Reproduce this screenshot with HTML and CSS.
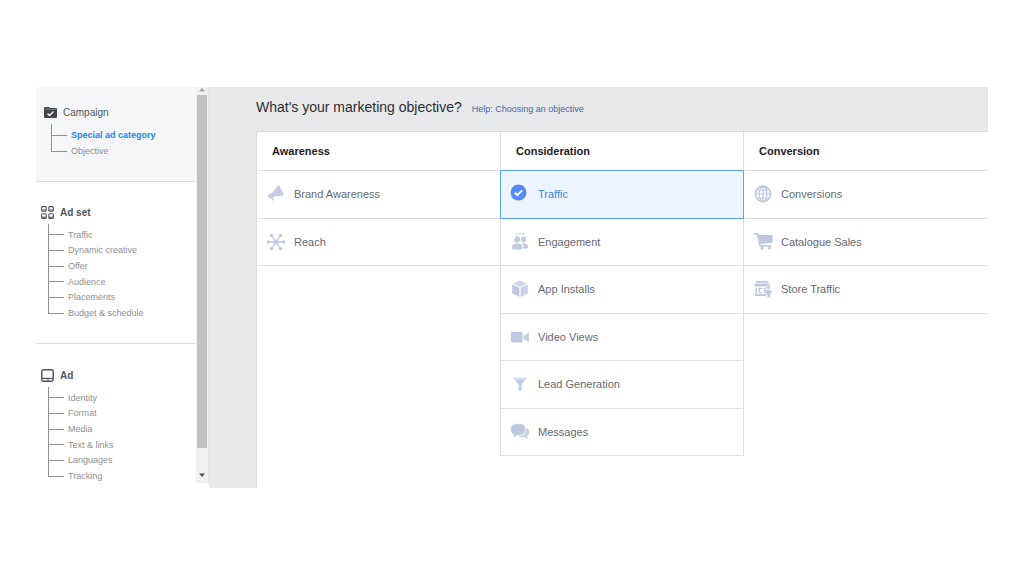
FILE: index.html
```html
<!DOCTYPE html>
<html lang="en">
<head>
<meta charset="utf-8">
<meta name="viewport" content="width=device-width, initial-scale=1">
<title>Campaign objective</title>
<link rel="stylesheet" href="styles.css">
</head>
<body>
<div class="app">
  <nav class="sidebar" aria-label="Campaign steps">
    <div class="steps">
      <section class="step step-current">
        <h2 class="step-title">
          <svg class="step-icon" viewBox="0 0 13 13" aria-hidden="true"><path fill="#3f4650" d="M1 1h4l1 1h6q1 0 1 1v8q0 1-1 1H1q-1 0-1-1V2q0-1 1-1z"/><path fill="none" stroke="#8d949e" stroke-width=".7" d="M1 3.300h11"/><path fill="none" stroke="#fff" stroke-width="1.4" d="M3.5 7.5l2 2 4-4"/></svg>
          Campaign</h2>
        <ul class="tree">
          <li><a class="current" href="#special">Special ad category</a></li>
          <li><a href="#objective">Objective</a></li>
        </ul>
      </section>
      <section class="step">
        <h2 class="step-title strong">
          <svg class="step-icon" viewBox="0 0 13 13" aria-hidden="true"><g fill="#fff" stroke="#4b5260" stroke-width="1.1"><rect x=".6" y=".6" width="4.6" height="4.6" rx="1"/><rect x="7.8" y=".6" width="4.6" height="4.6" rx="1"/><rect x=".6" y="7.8" width="4.6" height="4.6" rx="1"/><rect x="7.8" y="7.8" width="4.6" height="4.6" rx="1"/></g><path stroke="#4b5260" d="M1 4h4M8 4h4M1 11.2h4M8 11.2h4"/></svg>
          Ad set</h2>
        <ul class="tree">
          <li><a href="#traffic">Traffic</a></li>
          <li><a href="#dynamic">Dynamic creative</a></li>
          <li><a href="#offer">Offer</a></li>
          <li><a href="#audience">Audience</a></li>
          <li><a href="#placements">Placements</a></li>
          <li><a href="#budget">Budget &amp; schedule</a></li>
        </ul>
      </section>
      <section class="step step-last">
        <h2 class="step-title strong">
          <svg class="step-icon" viewBox="0 0 13 13" aria-hidden="true"><rect x=".8" y=".8" width="11.4" height="11.4" rx="1.6" fill="#fff" stroke="#4b5260" stroke-width="1.4"/><path stroke="#4b5260" stroke-width="1.2" d="M1 9.4h11"/><path stroke="#4b5260" d="M6 11h2"/></svg>
          Ad</h2>
        <ul class="tree">
          <li><a href="#identity">Identity</a></li>
          <li><a href="#format">Format</a></li>
          <li><a href="#media">Media</a></li>
          <li><a href="#text">Text &amp; links</a></li>
          <li><a href="#languages">Languages</a></li>
          <li><a href="#tracking">Tracking</a></li>
        </ul>
      </section>
    </div>
    <div class="scrollbar" aria-hidden="true">
      <svg class="arrow" viewBox="0 0 12 8"><path fill="#a3a3a3" d="M3 4.500h6L6 1z"/></svg>
      <div class="track"><div class="thumb"></div></div>
      <svg class="arrow arrow-down" viewBox="0 0 12 16"><path fill="#505050" d="M3 6.5h6L6 10z"/></svg>
    </div>
  </nav>

  <main class="main">
    <header class="heading">
      <h1>What's your marketing objective?</h1>
      <a href="#help">Help: Choosing an objective</a>
    </header>
    <div class="panel">
      <section class="column">
        <h2>Awareness</h2>
        <ul class="options">
          <li><button type="button"><svg class="icon" viewBox="0 0 20 20" aria-hidden="true"><path fill="#c3cce1" d="M12.2 1.6q1-.4 1.5.6l4 8.2q.3 1-.8 1.1L9 12.4l-2 .8.9 2.2q.3.8-.5 1.1-.8.3-1.2-.5l-1-2.2q-2 .7-2.8.2-1.4-2.3.4-3.6l4-2.1z"/></svg>Brand Awareness</button></li>
          <li><button type="button"><svg class="icon" viewBox="0 0 20 20" aria-hidden="true"><path stroke="#bccae4" stroke-width="1.3" d="M2 10h16M5.5 3.5l9 13M14.5 3.5l-9 13"/><g fill="#bccae4"><circle cx="10" cy="10" r="2.4"/><circle cx="2.2" cy="10" r="1.7"/><circle cx="17.8" cy="10" r="1.7"/><circle cx="5.5" cy="3.5" r="1.7"/><circle cx="14.5" cy="3.5" r="1.7"/><circle cx="5.5" cy="16.5" r="1.7"/><circle cx="14.5" cy="16.5" r="1.7"/></g></svg>Reach</button></li>
        </ul>
      </section>
      <section class="column">
        <h2>Consideration</h2>
        <ul class="options">
          <li class="selected"><button type="button" aria-pressed="true"><svg class="icon" viewBox="0 0 20 20" aria-hidden="true"><circle cx="8.500" cy="8.500" r="8" fill="#558af6"/><path fill="none" stroke="#fff" stroke-width="2" d="M4.700 8.7l2.6 2.5 4.8-4.8"/></svg>Traffic</button></li>
          <li><button type="button"><svg class="icon" viewBox="0 0 20 20" aria-hidden="true"><g fill="#c3cce1"><circle cx="6.6" cy="1.9" r=".9"/><circle cx="9.8" cy="1.9" r=".9"/><circle cx="13" cy="1.9" r=".9"/><ellipse cx="7.2" cy="7.4" rx="2.8" ry="3.1"/><ellipse cx="13.6" cy="7.4" rx="2.5" ry="2.8"/><path d="M2 17v-2q.3-3 3.300-3.500h3.800q3 .5 3.300 3.500v2q-5.200 1.500-10.400 0z"/><path d="M12 11.200h3q3 .7 3.300 3.300v1.500q-2.200 1-4.900.6 0-3.300-1.400-5.400z"/></g></svg>Engagement</button></li>
          <li><button type="button"><svg class="icon" viewBox="0 0 20 20" aria-hidden="true"><path fill="#ced6e7" d="M10 1.500l7.200 3.200L10 8 2.800 4.700z"/><path fill="#bdc7df" d="M2.200 5.600l7.200 3.200v9.200l-7.200-3.700z"/><path fill="#c6cfe3" d="M17.800 5.600l-7.200 3.200v9.200l7.200-3.700z"/></svg>App Installs</button></li>
          <li><button type="button"><svg class="icon" viewBox="0 0 20 20" aria-hidden="true"><rect x="1" y="5" width="11.500" height="10.500" rx="1" fill="#bec9e1"/><path fill="#c3cce1" d="M18.800 5.200v10l-5.300-3.800v-2.400z"/></svg>Video Views</button></li>
          <li><button type="button"><svg class="icon" viewBox="0 0 20 20" aria-hidden="true"><path fill="#ced7e8" d="M3.500 3.500h13v1.800h-13z"/><path fill="#becae1" d="M4.500 5.600h11l-4 4.800V16q0 1-2.800 1.200v-6.800z"/></svg>Lead Generation</button></li>
          <li><button type="button"><svg class="icon" viewBox="0 0 20 20" aria-hidden="true"><path fill="#cbd4e6" d="M11 6h5q3.300.8 3.300 4 0 2.800-2 4l.5 3.600-3.300-2.600Q9 16 7.500 13z"/><path fill="#bdc9e1" stroke="#fff" stroke-width=".7" d="M5 1.700h6.500q3.800.8 3.800 4.800v2.800q-.5 4-4.300 4H7.500l-4.300 3 .5-3.500Q.7 11.500.7 8.500v-2.500q.5-3.700 4.300-4.300z"/></svg>Messages</button></li>
        </ul>
      </section>
      <section class="column">
        <h2>Conversion</h2>
        <ul class="options">
          <li><button type="button"><svg class="icon" viewBox="0 0 20 20" aria-hidden="true"><g fill="none" stroke="#bcc8e1" stroke-width="1.200"><circle cx="10" cy="10" r="7.600" stroke-width="1.600"/><ellipse cx="10" cy="10" rx="3.800" ry="7.600"/><path d="M10 2.400v15.200M2.400 10h15.200M3.600 6h12.800M3.600 14h12.800"/></g></svg>Conversions</button></li>
          <li><button type="button"><svg class="icon" viewBox="0 0 20 20" aria-hidden="true"><path fill="#bdc9e1" d="M5 3h14.500v7.500l-12 1.800z"/><path fill="none" stroke="#bdc9e1" stroke-width="1.700" d="M1 1.800h3.500L7 13.800h11.500"/><circle cx="9" cy="16" r="1.500" fill="#bdc9e1"/><circle cx="16.500" cy="16" r="1.500" fill="#bdc9e1"/></svg>Catalogue Sales</button></li>
          <li><button type="button"><svg class="icon" viewBox="0 0 20 20" aria-hidden="true"><g fill="#c0cae1"><path d="M3 2h12.500v1.700H3zM2.500 4.500h13.500l1.300 3H1.200z"/><path d="M2.500 8.500H4V15h9v2H2v-2h.5zM5.500 9h4v1.300H7v2.800h2.500v1h-4zM11 9h1.500v5H11z"/><circle cx="15.500" cy="8.500" r="2" stroke="#fff" stroke-width=".6"/><path d="M13.500 11h4q1 0 1 1v3h-1.500v3.300h-2.800V15h-1.500v-3q0-1 .8-1z"/></g></svg>Store Traffic</button></li>
        </ul>
      </section>
    </div>
  </main>
</div>
</body>
</html>
```

FILE: styles.css
```css
* {
  box-sizing: border-box;
}

body {
  margin: 0;
  padding: 87px 36px;
  background: #fff;
  color: #666a72;
  font-family: "Liberation Sans", Arial, sans-serif;
  font-size: 11px;
}

h1,
h2,
ul {
  margin: 0;
  padding: 0;
  font-size: inherit;
  font-weight: normal;
}

ul {
  list-style: none;
}

a {
  color: inherit;
  text-decoration: none;
}

.app {
  display: flex;
}

/* Sidebar */

.sidebar {
  display: flex;
  flex: none;
  width: 173px;
}

.steps {
  flex: 1;
}

.step {
  padding: 22px 8px 22px 5px;
  border-bottom: 1px solid #dcdee1;
}

.step-current {
  padding: 17px 8px 22px;
  background: #f5f6f8;
}

.step-last {
  padding: 23px 8px 4px 5px;
  border-bottom: 0;
}

.step-title {
  display: flex;
  align-items: center;
  gap: 6px;
  height: 16px;
  color: #50565f;
  font-size: 10px;
}

.strong {
  font-weight: bold;
}

.step-icon {
  flex: none;
  width: 13px;
  height: 13px;
}

.tree {
  display: grid;
  grid-template-rows: 3px;
  grid-auto-rows: 1fr;
  height: 97px;
  margin: 4px 0 0 7px;
  color: #8e9095;
  font-size: 9px;
}

.step-current .tree {
  height: 35px;
}

.tree::before {
  content: "";
  border-left: 1px solid #8d9095;
}

.tree li {
  display: flex;
  align-items: center;
  gap: 4px;
}

.tree li::before {
  content: "";
  align-self: stretch;
  width: 15px;
  border-left: 1px solid #8d9095;
  background: linear-gradient(#8d9095, #8d9095) 0 50% / 100% 1px no-repeat;
}

.tree li:last-child::before {
  align-self: flex-start;
  height: 50%;
  border-bottom: 1px solid #8d9095;
  background: none;
}

.tree .current {
  color: #2286ee;
  font-weight: bold;
}

.scrollbar {
  display: flex;
  flex-direction: column;
  width: 13px;
  margin-bottom: 5px;
  background: #f1f1f1;
  border-right: 1px solid #e4e5e7;
}

.arrow {
  flex: none;
  width: 12px;
  height: 8px;
}

.arrow-down {
  height: 16px;
}

.track {
  flex: 1;
  padding: 0 1px;
}

.thumb {
  height: 95%;
  background: #c1c1c1;
}

/* Objective chooser */

.main {
  display: flex;
  flex: 1;
  flex-direction: column;
  padding-left: 47px;
  background: #e8e9eb;
}

.heading {
  display: flex;
  align-items: baseline;
  gap: 10px;
  padding: 12px 0 14px;
  line-height: 16px;
}

.heading h1 {
  color: #2c2e33;
  font-size: 14px;
}

.heading a {
  color: #4568ac;
  font-size: 9px;
}

.panel {
  display: grid;
  flex: 1;
  grid-template-columns: repeat(3, 1fr);
  border-top: 1px solid #d8dadd;
  border-radius: 3px 0 0 0;
  background: #fff;
}

.column:first-child {
  border-left: 1px solid #d8dadd;
  border-radius: 3px 0 0 0;
}

.column h2 {
  height: 38px;
  padding-left: 15px;
  color: #1d2129;
  font-weight: bold;
  line-height: 38px;
}

.options {
  display: grid;
  grid-template-rows: repeat(6, 1fr);
  height: 286px;
  border-top: 1px solid #dddfe2;
}

.options li {
  border-bottom: 1px solid #dddfe2;
}

.options button {
  display: flex;
  align-items: center;
  gap: 8px;
  width: 100%;
  height: 100%;
  padding: 0 9px;
  border: 0;
  background: none;
  color: inherit;
  font: inherit;
  text-align: left;
}

.column:nth-child(2) h2,
.column:nth-child(2) li {
  border: solid #dddfe2;
  border-width: 0 1px;
}

.column:nth-child(2) li {
  border-bottom-width: 1px;
}

.column:nth-child(2) .selected {
  margin-top: -1px;
  border: 1px solid #5aa2f2;
  background: #ecf5fd;
  color: #3a87e8;
}

.icon {
  flex: none;
  width: 20px;
  height: 20px;
}
```
